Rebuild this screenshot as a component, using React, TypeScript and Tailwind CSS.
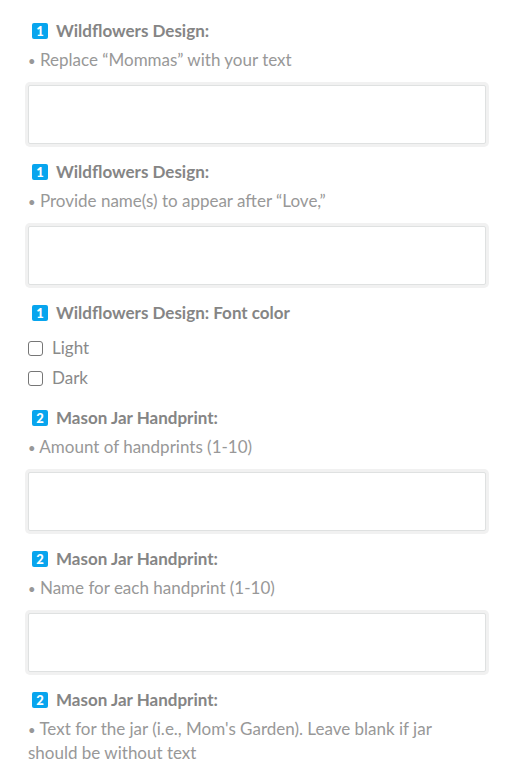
import { useId } from "react";

type Heading = {
  num: number;
  title: string;
};

type TextQuestion = Heading & {
  kind: "text";
  hint: string;
};

type ChoiceQuestion = Heading & {
  kind: "choice";
  options: string[];
};

type Question = TextQuestion | ChoiceQuestion;

const questions: Question[] = [
  {
    kind: "text",
    num: 1,
    title: "Wildflowers Design:",
    hint: "Replace “Mommas” with your text",
  },
  {
    kind: "text",
    num: 1,
    title: "Wildflowers Design:",
    hint: "Provide name(s) to appear after “Love,”",
  },
  {
    kind: "choice",
    num: 1,
    title: "Wildflowers Design: Font color",
    options: ["Light", "Dark"],
  },
  {
    kind: "text",
    num: 2,
    title: "Mason Jar Handprint:",
    hint: "Amount of handprints (1-10)",
  },
  {
    kind: "text",
    num: 2,
    title: "Mason Jar Handprint:",
    hint: "Name for each handprint (1-10)",
  },
];

function Title({ num, title }: Heading) {
  return (
    <span className="flex h-6 items-center gap-2 pl-1 font-bold text-[#858585]">
      <span className="flex size-4 items-center justify-center rounded-xs bg-[#08a5ee] text-[13px] font-black text-white">
        {num}
      </span>
      {title}
    </span>
  );
}

function Hint({ text }: { text: string }) {
  return (
    <span className="mt-[5px] block pr-4 text-[#989898]">
      <span className="text-[13px] leading-none">•</span> {text}
    </span>
  );
}

function TextField({ num, title, hint }: TextQuestion) {
  const id = useId();

  return (
    <div>
      <label htmlFor={id} className="block">
        <Title num={num} title={title} />
        <Hint text={hint} />
      </label>
      <input
        id={id}
        type="text"
        className="mt-[13px] block h-[59px] w-full rounded-xs border border-[#dfe1e1] bg-white px-3 ring-3 ring-[#f1f1f1] outline-none focus:border-[#08a5ee]"
      />
    </div>
  );
}

function ChoiceField({ num, title, options }: ChoiceQuestion) {
  return (
    <fieldset>
      <legend>
        <Title num={num} title={title} />
      </legend>
      <div className="-mb-[3px] pt-2">
        {options.map((option) => (
          <label
            key={option}
            className="flex h-[30px] items-center gap-[9px] text-[#8a8a8a]"
          >
            <input
              type="checkbox"
              className="size-[15px] appearance-none rounded-[3px] border border-[#767676] bg-white checked:bg-[#08a5ee]"
            />
            {option}
          </label>
        ))}
      </div>
    </fieldset>
  );
}

export default function App() {
  return (
    <form className="flex flex-col gap-4 bg-white pt-[19px] pr-[26px] pl-7 font-['Lato',sans-serif] text-[17px] leading-6 font-normal">
      {questions.map((q, i) =>
        q.kind === "text" ? (
          <TextField key={i} {...q} />
        ) : (
          <ChoiceField key={i} {...q} />
        ),
      )}

      <div>
        <Title num={2} title="Mason Jar Handprint:" />
        <Hint text="Text for the jar (i.e., Mom's Garden). Leave blank if jar should be without text" />
      </div>
    </form>
  );
}
